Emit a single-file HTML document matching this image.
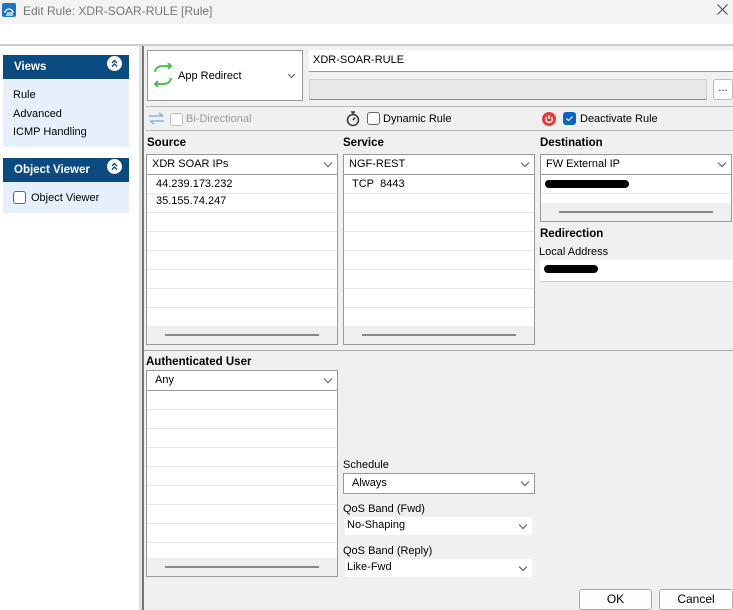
<!DOCTYPE html>
<html><head><style>
*{box-sizing:border-box;margin:0;padding:0}
body{width:733px;height:610px;overflow:hidden;background:#fff;font-family:"Liberation Sans",sans-serif;font-size:11px;color:#000;position:relative}
.a{position:absolute}
.lbl{position:absolute;font-size:11px}
.b{font-weight:bold;font-size:11.5px}
.combo{position:absolute;background:#fff;border:1px solid #999;height:21px;padding:3px 5px;font-size:11px}
.combo:after{content:"";position:absolute;right:6px;top:5px;width:5px;height:5px;border-right:1px solid #555;border-bottom:1px solid #555;transform:rotate(45deg)}
.list{position:absolute;background:#fff;border:1px solid #999;background-image:repeating-linear-gradient(#fff 0 18px,#e8e8e8 18px 19px)}
.sb{position:absolute;left:0;right:0;bottom:0;height:18px;background:#efefef}
.sb:after{content:"";position:absolute;left:18px;right:18px;top:8px;height:2px;background:#888}
.cb{position:absolute;width:13px;height:13px;border:1px solid #666;border-radius:3px;background:#fff}
.hr{position:absolute;height:1px;background:#bbb}
</style></head><body>
<div class="a" style="left:0;top:0;width:733px;height:24px;background:#f3f3f3"></div>
<svg class="a" style="left:2px;top:3px" width="14" height="14" viewBox="0 0 14 14"><rect width="14" height="14" rx="2" fill="#1a78c2"/><path d="M3 10 A4 4 0 0 1 11 10 M5 10 L11 10 M4 12 L11 12" stroke="#fff" stroke-width="1.3" fill="none"/></svg>
<div class="lbl" style="left:23px;top:4px;font-size:12px;color:#777">Edit Rule: XDR-SOAR-RULE [Rule]</div>
<svg class="a" style="left:717px;top:4px" width="11" height="11"><path d="M0.5 0.5 L10.5 10.5 M10.5 0.5 L0.5 10.5" stroke="#444" stroke-width="1"/></svg>
<div class="a" style="left:0;top:44px;width:733px;height:2px;background:#ccc"></div>
<div class="a" style="left:0;top:46px;width:139px;height:564px;background:#fff"></div>
<div class="a" style="left:139px;top:46px;width:3px;height:564px;background:#e0e0e0"></div>
<div class="a" style="left:142px;top:46px;width:2px;height:564px;background:#777"></div>
<div class="a" style="left:144px;top:46px;width:589px;height:564px;background:#f0f0f0"></div>
<div class="a" style="left:3px;top:55px;width:126px;height:24px;background:#0c4a82"></div>
<div class="lbl b" style="left:14px;top:61px;color:#fff">Views</div>
<svg class="a" style="left:107px;top:56px" width="15" height="15"><circle cx="7.5" cy="7.5" r="7.5" fill="#fff"/><path d="M5 7 L7.5 4.5 L10 7 M5 10.5 L7.5 8 L10 10.5" stroke="#0c4a82" stroke-width="1.4" fill="none"/></svg>
<div class="a" style="left:3px;top:79px;width:126px;height:68px;background:#e6f0fa"></div>
<div class="lbl" style="left:13px;top:89px">Rule</div>
<div class="lbl" style="left:13px;top:108px">Advanced</div>
<div class="lbl" style="left:13px;top:126px">ICMP Handling</div>
<div class="a" style="left:3px;top:158px;width:126px;height:24px;background:#0c4a82"></div>
<div class="lbl b" style="left:14px;top:164px;color:#fff">Object Viewer</div>
<svg class="a" style="left:107px;top:159px" width="15" height="15"><circle cx="7.5" cy="7.5" r="7.5" fill="#fff"/><path d="M5 7 L7.5 4.5 L10 7 M5 10.5 L7.5 8 L10 10.5" stroke="#0c4a82" stroke-width="1.4" fill="none"/></svg>
<div class="a" style="left:3px;top:182px;width:126px;height:31px;background:#e6f0fa"></div>
<div class="cb" style="left:13px;top:191px"></div>
<div class="lbl" style="left:31px;top:192px">Object Viewer</div>

<div class="a" style="left:147px;top:50px;width:156px;height:51px;background:#fff;border:1px solid #999"></div>
<svg class="a" style="left:152px;top:63px" width="22" height="24" viewBox="0 0 22 24"><path d="M3 9 Q4 3 11 3 L19 3 M16 0 L19 3 L16 6 M19 15 Q18 21 11 21 L3 21 M6 18 L3 21 L6 24" fill="none" stroke="#4cc24c" stroke-width="2"/></svg>
<div class="lbl" style="left:178px;top:70px">App Redirect</div>
<div class="a" style="left:289px;top:72px;width:5px;height:5px;border-right:1px solid #555;border-bottom:1px solid #555;transform:rotate(45deg)"></div>
<div class="a" style="left:309px;top:50px;width:424px;height:22px;background:#fff;border-bottom:1px solid #999"></div>
<div class="lbl" style="left:313px;top:54px">XDR-SOAR-RULE</div>
<div class="a" style="left:309px;top:79px;width:398px;height:21px;background:#e8e8e8;border:1px solid #ccc;border-bottom-color:#888"></div>
<div class="a" style="left:713px;top:79px;width:20px;height:21px;background:#fff;border:1px solid #bbb;border-radius:3px;text-align:center;line-height:16px">...</div>
<div class="hr" style="left:146px;top:106px;width:587px"></div>
<svg class="a" style="left:148px;top:112px" width="17" height="13"><path d="M1 4 L15 4 M11 1 L15 4 M16 9 L2 9 M6 12 L2 9" stroke="#8ab4dd" stroke-width="1.6" fill="none"/></svg>
<div class="cb" style="left:170px;top:113px;border-color:#bbb"></div>
<div class="lbl" style="left:186px;top:113px;color:#999">Bi-Directional</div>
<svg class="a" style="left:346px;top:110px" width="14" height="17"><circle cx="7" cy="10" r="5.5" stroke="#333" stroke-width="1.5" fill="none"/><path d="M5 2 L9 2 M7 2 L7 4.5 M7 10 L9 7.5" stroke="#333" stroke-width="1.5"/></svg>
<div class="cb" style="left:367px;top:112px"></div>
<div class="lbl" style="left:383px;top:113px">Dynamic Rule</div>
<svg class="a" style="left:542px;top:112px" width="14" height="14"><circle cx="7" cy="7" r="7" fill="#e53935"/><path d="M4.7 5 A3.2 3.2 0 1 0 9.3 5" stroke="#fff" stroke-width="1.5" fill="none"/><path d="M7 3 L7 7" stroke="#fff" stroke-width="1.5"/></svg>
<svg class="a" style="left:563px;top:112px" width="13" height="13"><rect width="13" height="13" rx="3" fill="#0b63c4"/><path d="M3.5 6.5 L5.5 8.5 L9.5 4.5" stroke="#fff" stroke-width="1.2" fill="none"/></svg>
<div class="lbl" style="left:580px;top:113px">Deactivate Rule</div>
<div class="hr" style="left:146px;top:130px;width:587px"></div>

<div class="lbl b" style="left:147px;top:137px">Source</div>
<div class="combo" style="left:146px;top:154px;width:192px">XDR SOAR IPs</div>
<div class="list" style="left:146px;top:174px;width:192px;height:171px"><div class="sb"></div></div>
<div class="lbl" style="left:156px;top:178px">44.239.173.232</div>
<div class="lbl" style="left:156px;top:195px">35.155.74.247</div>
<div class="lbl b" style="left:343px;top:137px">Service</div>
<div class="combo" style="left:343px;top:154px;width:192px">NGF-REST</div>
<div class="list" style="left:343px;top:174px;width:192px;height:171px"><div class="sb"></div></div>
<div class="lbl" style="left:352px;top:178px">TCP&nbsp; 8443</div>
<div class="lbl b" style="left:540px;top:137px">Destination</div>
<div class="combo" style="left:540px;top:154px;width:192px">FW External IP</div>
<div class="list" style="left:540px;top:174px;width:192px;height:48px"><div class="sb"></div></div>
<div class="a" style="left:545px;top:180px;width:84px;height:8px;border-radius:4px;background:#000"></div>
<div class="lbl b" style="left:540px;top:228px">Redirection</div>
<div class="lbl" style="left:539px;top:246px">Local Address</div>
<div class="a" style="left:540px;top:260px;width:192px;height:22px;background:#fff;border-bottom:1px solid #ccc"></div>
<div class="a" style="left:544px;top:265px;width:54px;height:8px;border-radius:4px;background:#000"></div>
<div class="hr" style="left:144px;top:350px;width:589px;background:#aaa"></div>

<div class="lbl b" style="left:146px;top:356px">Authenticated User</div>
<div class="combo" style="left:146px;top:370px;width:192px;padding-left:8px">Any</div>
<div class="list" style="left:146px;top:390px;width:192px;height:187px"><div class="sb"></div></div>
<div class="lbl" style="left:343px;top:459px">Schedule</div>
<div class="combo" style="left:343px;top:473px;width:192px;padding-left:8px">Always</div>
<div class="lbl" style="left:343px;top:503px">QoS Band (Fwd)</div>
<div class="combo" style="left:345px;top:517px;width:187px;height:18px;border:none;padding:2px 2px">No-Shaping</div>
<div class="lbl" style="left:343px;top:545px">QoS Band (Reply)</div>
<div class="combo" style="left:345px;top:559px;width:187px;height:18px;border:none;padding:2px 2px">Like-Fwd</div>

<div class="a" style="left:579px;top:589px;width:73px;height:21px;background:#fdfdfd;border:1px solid #aaa;border-radius:3px;text-align:center;line-height:19px;font-size:12px">OK</div>
<div class="a" style="left:659px;top:589px;width:74px;height:21px;background:#fdfdfd;border:1px solid #aaa;border-radius:3px;text-align:center;line-height:19px;font-size:12px">Cancel</div>
</body></html>
